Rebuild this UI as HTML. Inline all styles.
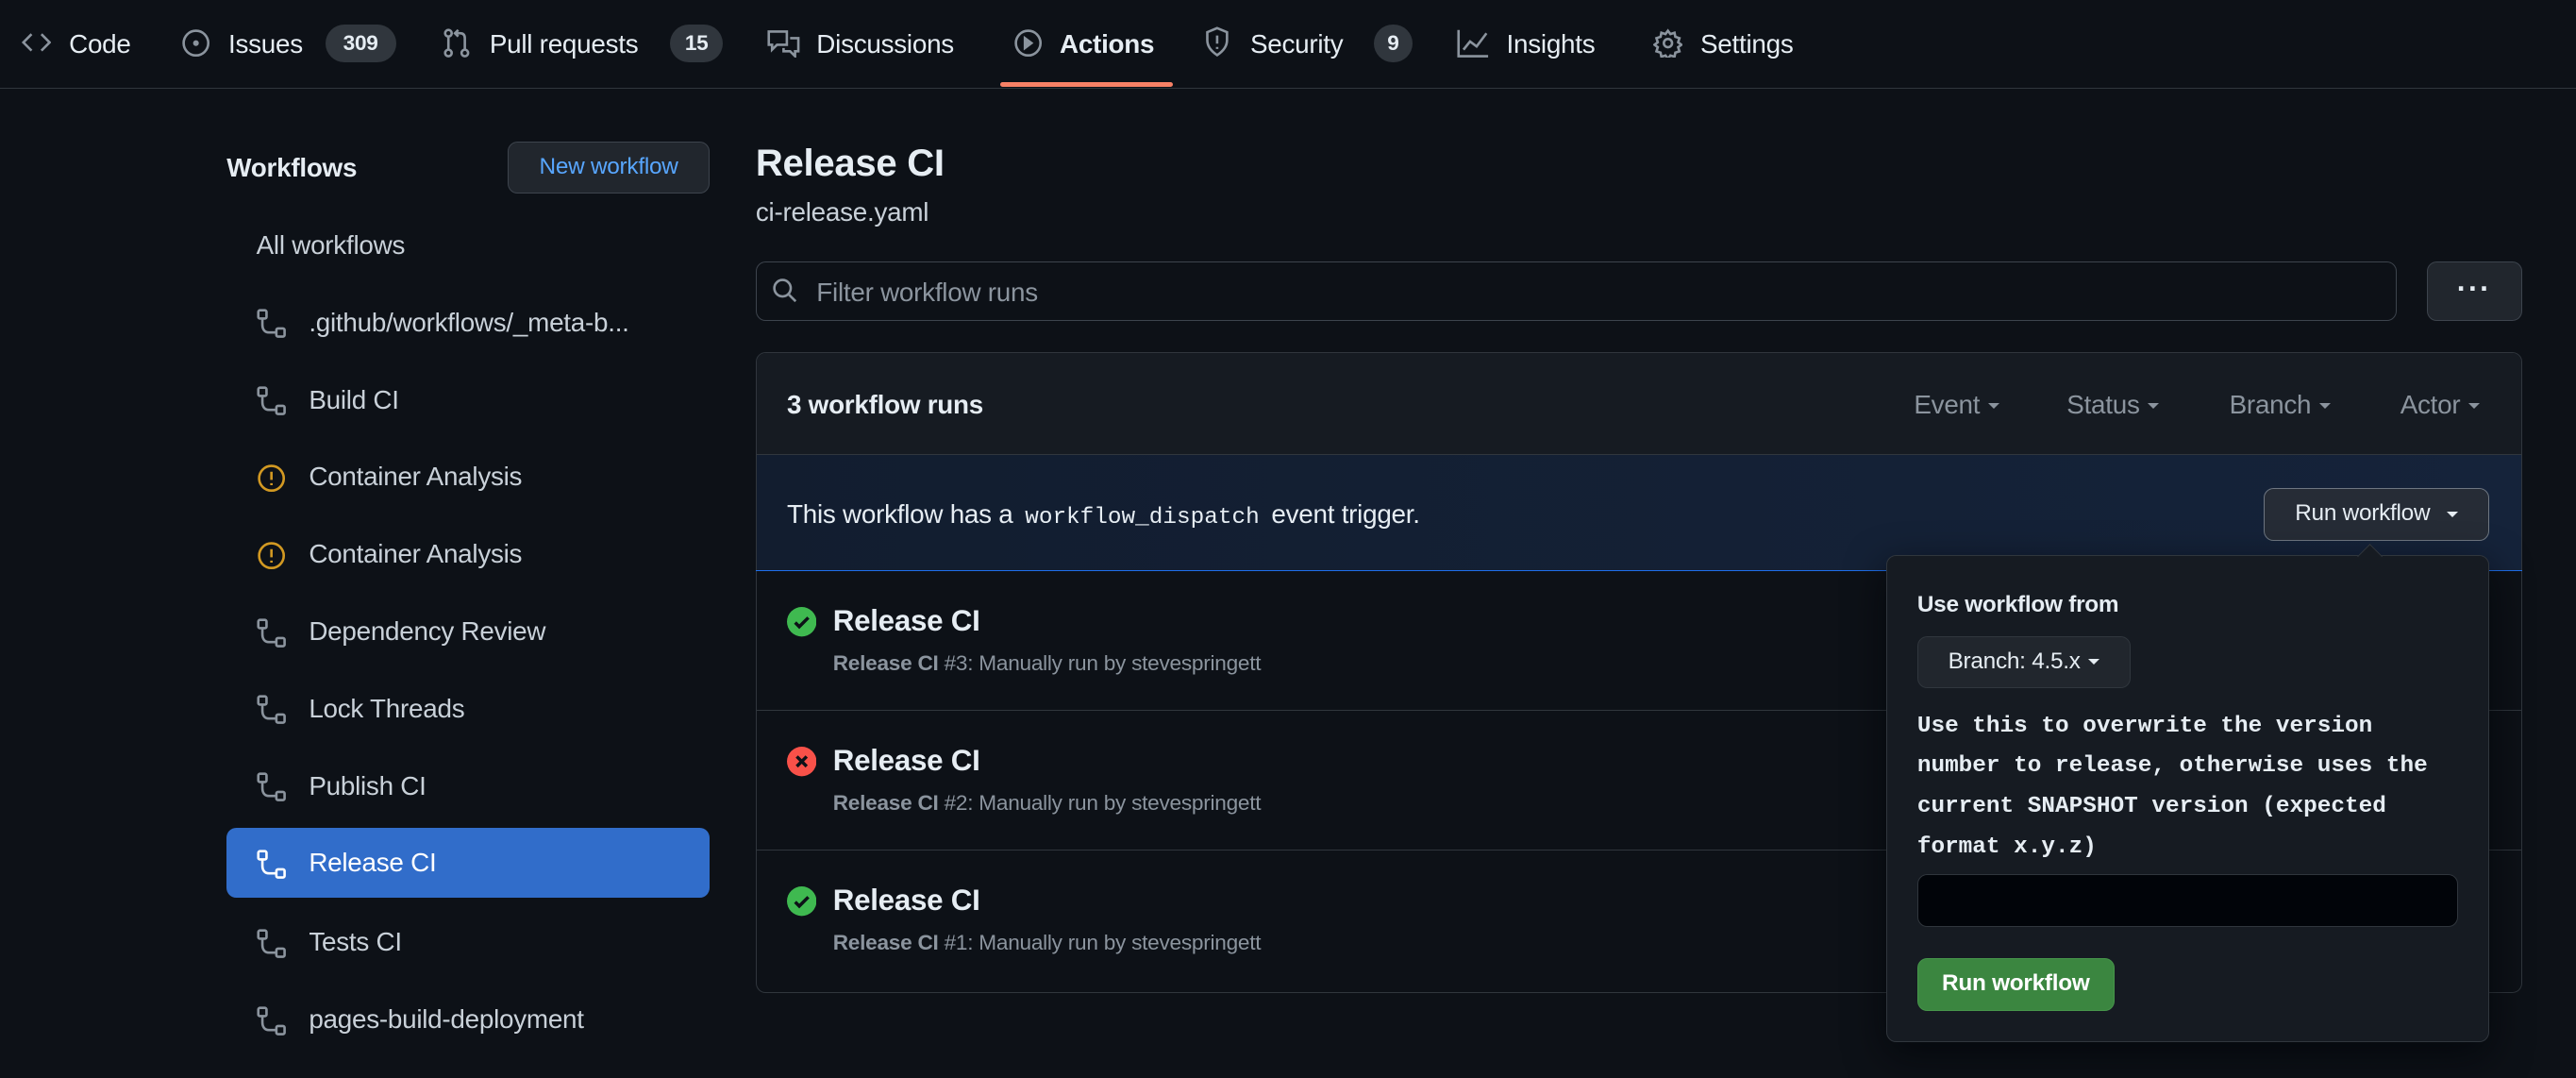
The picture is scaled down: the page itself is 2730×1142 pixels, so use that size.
<!DOCTYPE html>
<html><head><meta charset="utf-8"><style>
*{box-sizing:border-box;margin:0;padding:0}
html,body{width:2730px;height:1142px;overflow:hidden;background:#0d1117}
#r{zoom:1.74107;width:1568px;height:656px;position:relative;font-family:"Liberation Sans",sans-serif;color:#e6edf3;background:#0d1117;letter-spacing:-0.15px}
.a{position:absolute}
.nav{left:0;top:0;width:1568px;height:54px;border-bottom:1px solid #30363d}
.t{position:absolute;top:17px;font-size:16px;line-height:20px;color:#e6edf3;white-space:nowrap}
.cnt{position:absolute;top:15px;height:23px;border-radius:12px;background:#30363d;font-size:13px;font-weight:bold;line-height:23px;text-align:center;color:#e6edf3}
svg{position:absolute;fill:none;stroke:#8b949e;stroke-width:1.5}
.it{position:absolute;left:138px;width:294px;height:42px;border-radius:6px;font-size:16px;line-height:42px;color:#c9d1d9}
.it span{position:absolute;left:50px}
.it svg{left:18px;top:13px}
.btn{position:absolute;border:1px solid #3d444d;background:#21262d;border-radius:6px;font-size:14px;color:#e6edf3;text-align:center}
.row{position:absolute;left:460px;width:1075px;height:85px;border-top:1px solid #30363d}
.row b{position:absolute;left:47px;top:20px;font-size:18px}
.row i{position:absolute;left:47px;top:49px;font-size:13px;font-style:normal;color:#8b949e}
.row i b{position:static;font-size:13px}
.mono{font-family:"Liberation Mono","DejaVu Sans Mono",monospace;letter-spacing:0}
.car{display:inline-block;width:0;height:0;border-left:4px solid transparent;border-right:4px solid transparent;border-top:4px solid currentColor;vertical-align:middle;margin-left:5px}
</style></head><body><div id="r">
<div class="a nav">
<svg style="left:13px;top:18px" width="18" height="16" viewBox="0 0 18 16"><path d="M6 3L1 8l5 5M12 3l5 5-5 5"/></svg>
<div class="t" style="left:42px">Code</div>
<svg style="left:110px;top:17px" width="18" height="18" viewBox="0 0 18 18"><circle cx="9" cy="9" r="7.5"/><circle cx="9" cy="9" r="1" fill="#8b949e"/></svg>
<div class="t" style="left:139px">Issues</div><div class="cnt" style="left:198px;width:43px">309</div>
<svg style="left:270px;top:17px" width="16" height="18" viewBox="0 0 16 18"><circle cx="3" cy="3" r="2"/><circle cx="3" cy="15" r="2"/><circle cx="13" cy="15" r="2"/><path d="M3 5v8M13 13V6c0-2-1-3-3-3H7M9 1L7 3l2 2"/></svg>
<div class="t" style="left:298px">Pull requests</div><div class="cnt" style="left:408px;width:32px">15</div>
<svg style="left:467px;top:17px" width="20" height="18" viewBox="0 0 20 18"><path d="M1 2h11v8H6l-3 3v-3H1zM14 6h5v8h-2v3l-3-3h-4v-2"/></svg>
<div class="t" style="left:497px">Discussions</div>
<svg style="left:617px;top:17px" width="18" height="18" viewBox="0 0 18 18"><circle cx="9" cy="9" r="7.5"/><path d="M7 6l4 3-4 3z" fill="#8b949e"/></svg>
<div class="t" style="left:645px;font-weight:bold">Actions</div>
<div class="a" style="left:609px;top:50px;width:105px;height:3px;background:#f78166;border-radius:2px"></div>
<svg style="left:733px;top:16px" width="16" height="19" viewBox="0 0 16 19"><path d="M8 1L2 3.5v5c0 4 3 7 6 9 3-2 6-5 6-9v-5z"/><path d="M8 5.5v5M8 12.5v1.2"/></svg>
<div class="t" style="left:761px">Security</div><div class="cnt" style="left:836px;width:24px">9</div>
<svg style="left:887px;top:17px" width="20" height="18" viewBox="0 0 20 18"><path d="M1 1v16h18M4 13l4-5 4 3 6-8"/></svg>
<div class="t" style="left:917px">Insights</div>
<svg style="left:1006px;top:17px" width="18" height="18" viewBox="0 0 18 18"><circle cx="9" cy="9" r="2.5"/><path d="M9 1.5l1.5 2 2.5-.8.5 2.5 2.5.8-.8 2.5 2 1.5-2 1.5.8 2.5-2.5.8-.5 2.5-2.5-.8-1.5 2-1.5-2-2.5.8-.5-2.5-2.5-.8.8-2.5-2-1.5 2-1.5-.8-2.5 2.5-.8.5-2.5 2.5.8z"/></svg>
<div class="t" style="left:1035px">Settings</div>
</div>

<div class="a" style="left:138px;top:93px;font-size:16px;font-weight:bold">Workflows</div>
<div class="btn" style="left:309px;top:86px;width:123px;height:32px;line-height:30px;color:#58a6ff">New workflow</div>

<div class="it" style="top:128px"><span style="left:18px">All workflows</span></div>
<div class="it" style="top:175px"><svg width="18" height="18" viewBox="0 0 18 18"><rect x="1" y="1" width="5" height="5" rx="1"/><rect x="12" y="12" width="5" height="5" rx="1"/><path d="M3.5 6v4c0 2 1 4.5 4 4.5H12"/></svg><span>.github/workflows/_meta-b...</span></div>
<div class="it" style="top:222px"><svg width="18" height="18" viewBox="0 0 18 18"><rect x="1" y="1" width="5" height="5" rx="1"/><rect x="12" y="12" width="5" height="5" rx="1"/><path d="M3.5 6v4c0 2 1 4.5 4 4.5H12"/></svg><span>Build CI</span></div>
<div class="it" style="top:269px"><svg width="18" height="18" viewBox="0 0 18 18" style="stroke:#d29922"><circle cx="9" cy="9" r="7.5"/><path d="M9 5v5M9 12v1.2"/></svg><span>Container Analysis</span></div>
<div class="it" style="top:316px"><svg width="18" height="18" viewBox="0 0 18 18" style="stroke:#d29922"><circle cx="9" cy="9" r="7.5"/><path d="M9 5v5M9 12v1.2"/></svg><span>Container Analysis</span></div>
<div class="it" style="top:363px"><svg width="18" height="18" viewBox="0 0 18 18"><rect x="1" y="1" width="5" height="5" rx="1"/><rect x="12" y="12" width="5" height="5" rx="1"/><path d="M3.5 6v4c0 2 1 4.5 4 4.5H12"/></svg><span>Dependency Review</span></div>
<div class="it" style="top:410px"><svg width="18" height="18" viewBox="0 0 18 18"><rect x="1" y="1" width="5" height="5" rx="1"/><rect x="12" y="12" width="5" height="5" rx="1"/><path d="M3.5 6v4c0 2 1 4.5 4 4.5H12"/></svg><span>Lock Threads</span></div>
<div class="it" style="top:457px"><svg width="18" height="18" viewBox="0 0 18 18"><rect x="1" y="1" width="5" height="5" rx="1"/><rect x="12" y="12" width="5" height="5" rx="1"/><path d="M3.5 6v4c0 2 1 4.5 4 4.5H12"/></svg><span>Publish CI</span></div>
<div class="it" style="top:504px;background:#316dca;color:#fff"><svg width="18" height="18" viewBox="0 0 18 18" style="stroke:#fff"><rect x="1" y="1" width="5" height="5" rx="1"/><rect x="12" y="12" width="5" height="5" rx="1"/><path d="M3.5 6v4c0 2 1 4.5 4 4.5H12"/></svg><span>Release CI</span></div>
<div class="it" style="top:552px"><svg width="18" height="18" viewBox="0 0 18 18"><rect x="1" y="1" width="5" height="5" rx="1"/><rect x="12" y="12" width="5" height="5" rx="1"/><path d="M3.5 6v4c0 2 1 4.5 4 4.5H12"/></svg><span>Tests CI</span></div>
<div class="it" style="top:599px"><svg width="18" height="18" viewBox="0 0 18 18"><rect x="1" y="1" width="5" height="5" rx="1"/><rect x="12" y="12" width="5" height="5" rx="1"/><path d="M3.5 6v4c0 2 1 4.5 4 4.5H12"/></svg><span>pages-build-deployment</span></div>

<div class="a" style="left:460px;top:87px;font-size:23px;font-weight:bold">Release CI</div>
<div class="a" style="left:460px;top:120px;font-size:16px;color:#c9d1d9">ci-release.yaml</div>
<div class="a" style="left:460px;top:159px;width:999px;height:36px;border:1px solid #3d444d;border-radius:6px;background:#0d1117"></div>
<svg style="left:470px;top:169px" width="16" height="16" viewBox="0 0 16 16"><circle cx="6.5" cy="6.5" r="5"/><path d="M10.5 10.5l4 4"/></svg>
<div class="a" style="left:497px;top:169px;font-size:16px;color:#8b949e">Filter workflow runs</div>
<div class="btn" style="left:1477px;top:159px;width:58px;height:36px;line-height:32px;font-size:18px;letter-spacing:1px;font-weight:bold">···</div>

<div class="a" style="left:460px;top:214px;width:1075px;height:390px;border:1px solid #30363d;border-radius:6px;overflow:hidden">
<div class="a" style="left:0;top:0;width:1075px;height:62px;background:#161b22;border-bottom:1px solid #30363d"></div>
<div class="a" style="left:0;top:62px;width:1075px;height:71px;background:linear-gradient(90deg,#121d2f,#15233a);border-bottom:1px solid #1f6feb"></div>
</div>
<div class="a" style="left:479px;top:237px;font-size:16px;font-weight:bold">3 workflow runs</div>
<div class="a" style="left:1165px;top:237px;font-size:16px;color:#8b949e">Event<span class="car"></span></div>
<div class="a" style="left:1258px;top:237px;font-size:16px;color:#8b949e">Status<span class="car"></span></div>
<div class="a" style="left:1357px;top:237px;font-size:16px;color:#8b949e">Branch<span class="car"></span></div>
<div class="a" style="left:1461px;top:237px;font-size:16px;color:#8b949e">Actor<span class="car"></span></div>
<div class="a" style="left:479px;top:304px;font-size:16px">This workflow has a <span class="mono" style="font-size:14px;padding:0 3px">workflow_dispatch</span> event trigger.</div>
<div class="btn" style="left:1378px;top:297px;width:137px;height:32px;line-height:30px;background:#262c36;border-color:#6e7681">Run workflow<span class="car" style="margin-left:10px"></span></div>

<div class="row" style="top:347px;border-top-color:#1f6feb"><svg style="left:19px;top:22px;stroke:none" width="18" height="18" viewBox="0 0 18 18"><circle cx="9" cy="9" r="9" fill="#3fb950"/><path d="M5 9.5l2.5 2.5L13 6.5" stroke="#0d1117" stroke-width="2"/></svg><b>Release CI</b><i><b>Release CI</b> #3: Manually run by stevespringett</i></div>
<div class="row" style="top:432px"><svg style="left:19px;top:22px;stroke:none" width="18" height="18" viewBox="0 0 18 18"><circle cx="9" cy="9" r="9" fill="#f85149"/><path d="M6 6l6 6M12 6l-6 6" stroke="#0d1117" stroke-width="2"/></svg><b>Release CI</b><i><b>Release CI</b> #2: Manually run by stevespringett</i></div>
<div class="row" style="top:517px"><svg style="left:19px;top:22px;stroke:none" width="18" height="18" viewBox="0 0 18 18"><circle cx="9" cy="9" r="9" fill="#3fb950"/><path d="M5 9.5l2.5 2.5L13 6.5" stroke="#0d1117" stroke-width="2"/></svg><b>Release CI</b><i><b>Release CI</b> #1: Manually run by stevespringett</i></div>

<div class="a" style="left:1148px;top:338px;width:367px;height:296px;background:#161b22;border:1px solid #30363d;border-radius:6px;box-shadow:0 8px 24px rgba(1,4,9,.7)"></div>
<div class="a" style="left:1437px;top:333px;width:11px;height:11px;background:#161b22;border-left:1px solid #30363d;border-top:1px solid #30363d;transform:rotate(45deg)"></div>
<div class="a" style="left:1167px;top:360px;font-size:14px;font-weight:bold">Use workflow from</div>
<div class="btn" style="left:1167px;top:387px;width:130px;height:32px;line-height:30px;background:#21262d;border-color:#30363d">Branch: 4.5.x<span class="car"></span></div>
<div class="a mono" style="left:1167px;top:430px;width:330px;font-size:14px;font-weight:bold;line-height:24.5px;color:#e6edf3">Use this to overwrite the version number to release, otherwise uses the current SNAPSHOT version (expected format x.y.z)</div>
<div class="a" style="left:1167px;top:532px;width:329px;height:32px;background:#010409;border:1px solid #30363d;border-radius:6px"></div>
<div class="a" style="left:1167px;top:583px;width:120px;height:32px;background:#3b8640;border:1px solid #46954a;border-radius:6px;font-size:14px;font-weight:bold;line-height:30px;text-align:center;color:#fff">Run workflow</div>
</div></body></html>
